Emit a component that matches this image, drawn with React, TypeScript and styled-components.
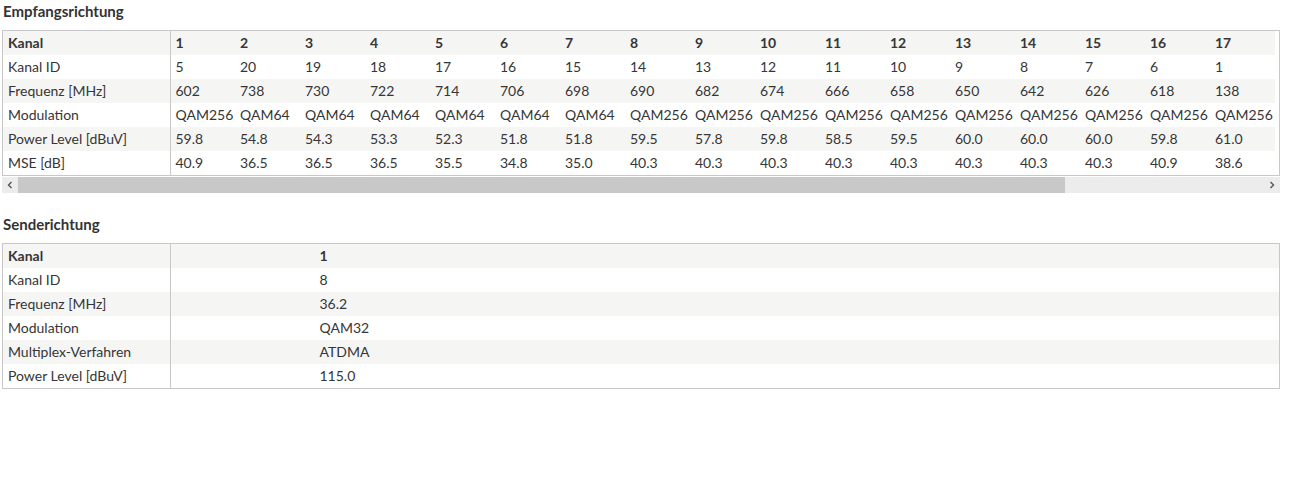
import React from "react";
import styled, { createGlobalStyle } from "styled-components";

const GlobalStyle = createGlobalStyle`
  body {
    margin: 0;
    background: #ffffff;
    font-family: Lato, "Liberation Sans", sans-serif;
    color: #363636;
  }
`;

interface Row {
  label: string;
  values: string[];
}

const downstream: Row[] = [
  {
    label: "Kanal",
    values: ["1", "2", "3", "4", "5", "6", "7", "8", "9", "10", "11", "12", "13", "14", "15", "16", "17"]
  },
  {
    label: "Kanal ID",
    values: ["5", "20", "19", "18", "17", "16", "15", "14", "13", "12", "11", "10", "9", "8", "7", "6", "1"]
  },
  {
    label: "Frequenz [MHz]",
    values: ["602", "738", "730", "722", "714", "706", "698", "690", "682", "674", "666", "658", "650", "642", "626", "618", "138"]
  },
  {
    label: "Modulation",
    values: ["QAM256", "QAM64", "QAM64", "QAM64", "QAM64", "QAM64", "QAM64", "QAM256", "QAM256", "QAM256", "QAM256", "QAM256", "QAM256", "QAM256", "QAM256", "QAM256", "QAM256"]
  },
  {
    label: "Power Level [dBuV]",
    values: ["59.8", "54.8", "54.3", "53.3", "52.3", "51.8", "51.8", "59.5", "57.8", "59.8", "58.5", "59.5", "60.0", "60.0", "60.0", "59.8", "61.0"]
  },
  {
    label: "MSE [dB]",
    values: ["40.9", "36.5", "36.5", "36.5", "35.5", "34.8", "35.0", "40.3", "40.3", "40.3", "40.3", "40.3", "40.3", "40.3", "40.3", "40.9", "38.6"]
  }
];

const upstream: Row[] = [
  { label: "Kanal", values: ["1"] },
  { label: "Kanal ID", values: ["8"] },
  { label: "Frequenz [MHz]", values: ["36.2"] },
  { label: "Modulation", values: ["QAM32"] },
  { label: "Multiplex-Verfahren", values: ["ATDMA"] },
  { label: "Power Level [dBuV]", values: ["115.0"] }
];

const Page = styled.div`
  padding: 0 10px 0 2px;
  width: 1278px;
`;

const Section = styled.section`
  & + & {
    margin-top: 20px;
  }
`;

const Heading = styled.h2`
  margin: 0;
  height: 30px;
  padding: 2px 0 0 1px;
  box-sizing: border-box;
  font-size: 15px;
  font-weight: 700;
  line-height: 18px;
  color: #333333;
`;

const Viewport = styled.div`
  border: 1px solid #c8c8c8;
  overflow: hidden;
`;

const Table = styled.table<{ $full?: boolean }>`
  border-collapse: collapse;
  table-layout: fixed;
  width: ${(p) => (p.$full ? "100%" : "auto")};
  font-size: 14px;
  line-height: 24px;
`;

const Tr = styled.tr<{ $shade: boolean }>`
  background: ${(p) => (p.$shade ? "#f5f5f4" : "#ffffff")};
`;

const LabelCell = styled.td<{ $bold: boolean }>`
  width: 167px;
  min-width: 167px;
  box-sizing: border-box;
  height: 24px;
  padding: 0 0 0 5px;
  border-right: 1px solid #c8c8c8;
  font-weight: ${(p) => (p.$bold ? 700 : 400)};
  white-space: nowrap;
`;

const ValueCell = styled.td<{ $bold: boolean; $indent: number }>`
  width: ${(p) => (p.$indent ? "auto" : "65px")};
  min-width: ${(p) => (p.$indent ? "0" : "65px")};
  box-sizing: border-box;
  padding: 0 0 0 ${(p) => p.$indent || 5}px;
  font-weight: ${(p) => (p.$bold ? 700 : 400)};
  white-space: nowrap;
`;

const ScrollBar = styled.div`
  display: flex;
  align-items: stretch;
  height: 16px;
  margin-top: 1px;
  background: #ececec;
`;

const Arrow = styled.div`
  width: 16px;
  display: flex;
  align-items: center;
  justify-content: center;
  flex: none;
`;

const Track = styled.div`
  flex: 1;
  display: flex;
`;

const Thumb = styled.div<{ $width: number }>`
  width: ${(p) => p.$width}px;
  background: #c8c8c8;
`;

const Chevron: React.FC<{ dir: "left" | "right" }> = ({ dir }) => (
  <svg width="6" height="8" viewBox="0 0 6 8">
    <path
      d={dir === "left" ? "M4.5 1 L1.5 4 L4.5 7" : "M1.5 1 L4.5 4 L1.5 7"}
      fill="none"
      stroke="#555"
      strokeWidth="1.4"
    />
  </svg>
);

const DataRows: React.FC<{ rows: Row[]; indent?: number }> = ({ rows, indent = 0 }) => (
  <tbody>
    {rows.map((row, i) => (
      <Tr key={row.label} $shade={i % 2 === 0}>
        <LabelCell $bold={i === 0}>{row.label}</LabelCell>
        {row.values.map((v, j) => (
          <ValueCell key={j} $bold={i === 0} $indent={indent}>
            {v}
          </ValueCell>
        ))}
      </Tr>
    ))}
  </tbody>
);

const App: React.FC = () => {
  return (
    <>
      <GlobalStyle />
      <Page>
        <Section>
          <Heading>Empfangsrichtung</Heading>
          <Viewport>
            <Table>
              <DataRows rows={downstream} />
            </Table>
          </Viewport>
          <ScrollBar>
            <Arrow>
              <Chevron dir="left" />
            </Arrow>
            <Track>
              <Thumb $width={1047} />
            </Track>
            <Arrow>
              <Chevron dir="right" />
            </Arrow>
          </ScrollBar>
        </Section>
        <Section>
          <Heading>Senderichtung</Heading>
          <Viewport>
            <Table $full>
              <DataRows rows={upstream} indent={149} />
            </Table>
          </Viewport>
        </Section>
      </Page>
    </>
  );
};

export default App;
